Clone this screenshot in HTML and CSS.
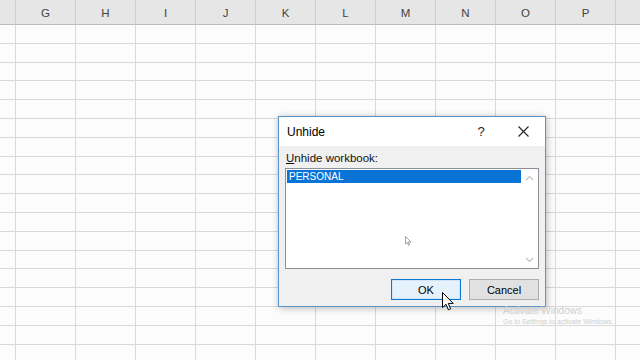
FILE: index.html
```html
<!DOCTYPE html>
<html lang="en">
<head>
  <meta charset="UTF-8">
  <title>Unhide workbook</title>
  <link rel="stylesheet" href="styles.css">
</head>
<body>

  <!-- SHEET -->
  <div class="sheet">
    <div class="col-heads">
      <div class="col-head"></div>
      <div class="col-head">G</div>
      <div class="col-head">H</div>
      <div class="col-head">I</div>
      <div class="col-head">J</div>
      <div class="col-head">K</div>
      <div class="col-head">L</div>
      <div class="col-head">M</div>
      <div class="col-head">N</div>
      <div class="col-head">O</div>
      <div class="col-head">P</div>
      <div class="col-head"></div>
    </div>
    <div class="rows">
      <div class="row"></div>
      <div class="row"></div>
      <div class="row"></div>
      <div class="row"></div>
      <div class="row"></div>
      <div class="row"></div>
      <div class="row"></div>
      <div class="row"></div>
      <div class="row"></div>
      <div class="row"></div>
      <div class="row"></div>
      <div class="row"></div>
      <div class="row"></div>
      <div class="row"></div>
      <div class="row"></div>
      <div class="row"></div>
      <div class="row"></div>
      <div class="row"></div>
    </div>
  </div>

  <!-- DIALOG -->
  <div class="dialog">
    <div class="dialog-title">
      <span class="title-text">Unhide</span>
      <span class="title-btn title-help">?</span>
      <span class="title-btn">
        <svg width="11" height="11" viewBox="0 0 11 11"><path d="M0.5 0.5 L10.5 10.5 M10.5 0.5 L0.5 10.5" stroke="#222" stroke-width="1.1" fill="none"/></svg>
      </span>
    </div>
    <div class="dialog-body">
      <div class="field-label"><u>U</u>nhide workbook:</div>
      <div class="listbox">
        <div class="list-items">
          <div class="list-item selected">PERSONAL</div>
        </div>
        <div class="scrollbar">
          <svg width="9" height="6" viewBox="0 0 9 6"><path d="M1 5 L4.5 1.5 L8 5" stroke="#c2c2c2" stroke-width="1.2" fill="none"/></svg>
          <svg width="9" height="6" viewBox="0 0 9 6"><path d="M1 1 L4.5 4.5 L8 1" stroke="#c2c2c2" stroke-width="1.2" fill="none"/></svg>
        </div>
      </div>
      <div class="buttons">
        <button class="btn btn-default">OK</button>
        <button class="btn">Cancel</button>
      </div>
    </div>
  </div>

  <!-- CURSORS -->
  <svg class="cursor cursor-list" width="7" height="10" viewBox="0 0 7 10"><path d="M0.5 0.5 L0.5 8 L2.3 6.4 L3.6 9.3 L4.6 8.8 L3.4 6 L6 6 Z" fill="#fff" stroke="#8a8a8a" stroke-width="0.8"/></svg>
  <svg class="cursor cursor-ok" width="13" height="20" viewBox="0 0 13 20"><path d="M0.5 0.5 L0.5 15.5 L4 12.2 L6.4 17.8 L8.6 16.8 L6.3 11.4 L11.2 11.4 Z" fill="#fff" stroke="#000" stroke-width="1"/></svg>

  <!-- WATERMARK -->
  <div class="watermark">
    <div class="wm-title">Activate Windows</div>
    <div class="wm-sub">Go to Settings to activate Windows.</div>
  </div>

</body>
</html>
```

FILE: styles.css
```css
/* === GERAL === */
* { margin: 0; padding: 0; box-sizing: border-box; }
body {
  width: 640px; height: 360px; overflow: hidden; position: relative;
  background: #fcfcfc; font-family: 'Liberation Sans', Arial, sans-serif; color: #000;
}

/* === PLANILHA === */
.col-heads {
  display: grid; grid-template-columns: 16px repeat(10, 60px) 1fr;
  height: 25px; background: #e6e6e6; border-bottom: 1px solid #bdbdbd;
}
.col-head {
  border-right: 1px solid #cdcdcd; font-size: 11.5px; color: #444;
  display: flex; align-items: center; justify-content: center; padding-top: 2px;
}
.col-head:last-child { border-right: none; }
.rows {
  background-image: linear-gradient(to right, transparent 59px, #d9d9d9 59px);
  background-size: 60px 100%; background-position: 16px 0;
}
.row { height: 18.8px; border-bottom: 1px solid #d9d9d9; }

/* === DIALOGO === */
.dialog {
  position: absolute; left: 278px; top: 116px; width: 268px; height: 191px;
  border: 1px solid #5b95c8; background: #f0f0f0;
  box-shadow: 0 0 6px rgba(0,0,0,0.18), 2px 3px 8px rgba(0,0,0,0.12);
  display: flex; flex-direction: column;
}
.dialog-title {
  height: 29px; background: #fff; display: flex; align-items: center;
  padding: 0 5px 0 8px; gap: 8px;
}
.title-text { font-size: 12px; flex: 1; }
.title-btn { width: 34px; display: flex; justify-content: center; align-items: center; font-size: 13px; color: #222; }
.dialog-body { flex: 1; padding: 5px 6px 0 6px; display: flex; flex-direction: column; }
.field-label { font-size: 11.5px; line-height: 14px; height: 14px; margin-bottom: 3px; padding-left: 1px; color: #111; }
.field-label u { text-decoration-thickness: 1px; text-underline-offset: 1px; }

.listbox {
  height: 101px; border: 1px solid #8c9096; background: #fff;
  display: flex;
}
.list-items { flex: 1; padding: 1px 0 0 1px; }
.list-item { height: 13px; font-size: 10px; line-height: 13px; padding-left: 2px; }
.list-item.selected { background: #0a74d6; color: #fff; }
.scrollbar {
  width: 17px; display: flex; flex-direction: column; justify-content: space-between;
  align-items: center; padding: 6px 0 5px;
}

.buttons { display: flex; justify-content: flex-end; gap: 8px; margin-top: 10px; }
.btn {
  width: 70px; height: 21px; font-family: inherit; font-size: 11px; color: #000;
  background: #e1e1e1; border: 1px solid #adadad;
}
.btn-default { background: #e5f1fb; border: 1px solid #0a78d4; box-shadow: inset 0 0 0 1px #cfe4f7; }

/* === CURSORES === */
.cursor { position: absolute; }
.cursor-list { left: 405px; top: 236px; }
.cursor-ok { left: 442px; top: 292px; }

/* === MARCA D'AGUA === */
.watermark { position: absolute; left: 503px; top: 304px; color: #cfcfcf; }
.wm-title { font-size: 10px; line-height: 13px; }
.wm-sub { font-size: 7px; line-height: 9px; }
```
